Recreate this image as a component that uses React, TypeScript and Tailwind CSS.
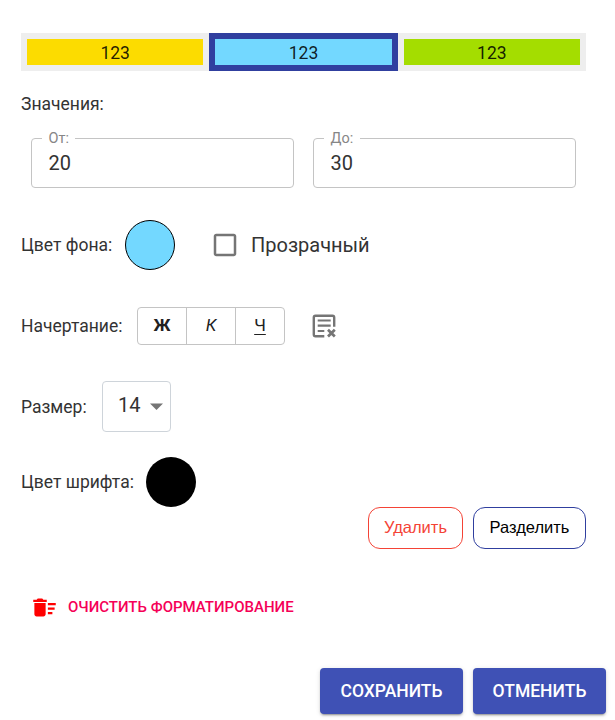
import React from "react";

function Swatch({ className }: { className: string }) {
  return (
    <div className={`flex h-[38px] flex-1 items-center justify-center border-[6px] pt-0.5 text-[17.5px] text-black/87 ${className}`}>
      123
    </div>
  );
}

function Field({ label, value, legend }: { label: string; value: string; legend: string }) {
  return (
    <div className="relative flex h-[50px] w-[263px] items-center rounded border border-[#c4c4c4] pl-[16.5px] text-[20px] text-[#333]">
      <span className={`absolute -top-[10px] left-[10px] bg-white pl-[6.5px] text-[14.5px] leading-5 text-[#868686] ${legend}`}>{label}</span>
      <span className="leading-6">{value}</span>
    </div>
  );
}

export default function App() {
  return (
    <div className="flex h-[720px] w-[615px] flex-col overflow-hidden bg-white pl-[21px] font-['Roboto','Liberation_Sans',sans-serif] text-[17.5px] leading-6 text-[#333]">
      <div className="mt-[33px] flex w-[565px]">
        <Swatch className="border-[#eee] bg-[#fcdc00]" />
        <Swatch className="border-[#303f9f] bg-[#73d8ff]" />
        <Swatch className="border-[#eee] bg-[#a4dd00]" />
      </div>

      <div className="mt-[21px]">Значения:</div>
      <div className="mt-[22px] ml-[10px] flex gap-[19px]">
        <Field label="От:" value="20" legend="w-[33px]" />
        <Field label="До:" value="30" legend="w-[36px]" />
      </div>

      <div className="mt-8 flex h-[50px] items-center">
        <span className="w-[104px]">Цвет фона:</span>
        <span className="size-[50px] rounded-full border border-black bg-[#73d8ff]" />
        <svg className="ml-[35px] size-[30px] fill-[#757575]" viewBox="0 0 24 24">
          <path d="M19 5v14H5V5h14m0-2H5c-1.1 0-2 .9-2 2v14c0 1.1.9 2 2 2h14c1.1 0 2-.9 2-2V5c0-1.1-.9-2-2-2z" />
        </svg>
        <span className="ml-[11px] text-[20px]">Прозрачный</span>
      </div>

      <div className="mt-[37px] flex h-[38px] items-center">
        <span className="w-[116px]">Начертание:</span>
        <div className="flex h-[38px] w-[148px] divide-x divide-[#c4c4c4] rounded border border-[#c4c4c4] text-[17px] text-[#212121]">
          <button className="flex-1 pb-0.5 font-bold">Ж</button>
          <button className="flex-1 pb-0.5 italic">К</button>
          <button className="flex-1 pb-0.5 underline underline-offset-[3px]">Ч</button>
        </div>
        <svg className="ml-[27px] size-6" viewBox="0 0 24 24" fill="none" stroke="#757575">
          <path d="M12.3 22.3H3.5Q1.8 22.3 1.8 20.6V3.5Q1.8 1.8 3.5 1.8H20.5Q22.2 1.8 22.2 3.5V12.7" strokeWidth="2.4" />
          <path d="M5.7 6.5H18.7M5.7 11.6H18.7M5.7 17H12.3" strokeWidth="2.2" />
          <path d="M16 15.7l6.8 6.8M22.8 15.7l-6.8 6.8" strokeWidth="2.7" />
        </svg>
      </div>

      <div className="mt-9 flex h-[51px] items-center">
        <span className="w-[81px]">Размер:</span>
        <button className="flex h-[51px] w-[69px] items-center rounded border border-[#ced4da] pl-[15px] text-[20px]">
          <span className="-mt-[3px]">14</span>
          <svg className="ml-[9.5px] h-[7px] w-[13px] fill-[#757575]" viewBox="0 0 13 7"><path d="M0 .5h13L6.5 7z" /></svg>
        </button>
      </div>

      <div className="mt-[25px] flex h-[50px] items-center">
        <span className="w-[125px]">Цвет шрифта:</span>
        <span className="size-[50px] rounded-full bg-black" />
      </div>

      <div className="flex w-[565px] justify-end gap-[10px] font-['Liberation_Sans',Arial,sans-serif] text-[16.5px]">
        <button className="h-[42px] w-[95px] rounded-[12px] border border-[#f44336] pb-0.5 text-[#f44336]">Удалить</button>
        <button className="h-[42px] w-[113px] rounded-[12px] border border-[#303f9f] pb-0.5 text-black">Разделить</button>
      </div>

      <button className="mt-[46px] ml-[10px] flex h-6 items-center text-[15px] font-medium text-[#f50057]">
        <svg className="size-[27px] fill-[red]" viewBox="0 0 24 24">
          <path d="M15 16h4v2h-4zm0-8h7v2h-7zm0 4h6v2h-6zM3 18c0 1.1.9 2 2 2h6c1.1 0 2-.9 2-2V8H3v10zM14 5h-3l-1-1H6L5 5H2v2h12z" />
        </svg>
        <span className="ml-[10px]">ОЧИСТИТЬ ФОРМАТИРОВАНИЕ</span>
      </button>

      <div className="mt-[49px] mr-[9px] flex justify-end gap-[10px] font-medium text-white">
        <button className="h-[46px] w-[143px] rounded bg-[#3f51b5] shadow-[0_3px_1px_-2px_#00000033,0_2px_2px_#00000024,0_1px_5px_#0000001f]">СОХРАНИТЬ</button>
        <button className="h-[46px] w-[133px] rounded bg-[#3f51b5] shadow-[0_3px_1px_-2px_#00000033,0_2px_2px_#00000024,0_1px_5px_#0000001f]">ОТМЕНИТЬ</button>
      </div>
    </div>
  );
}
